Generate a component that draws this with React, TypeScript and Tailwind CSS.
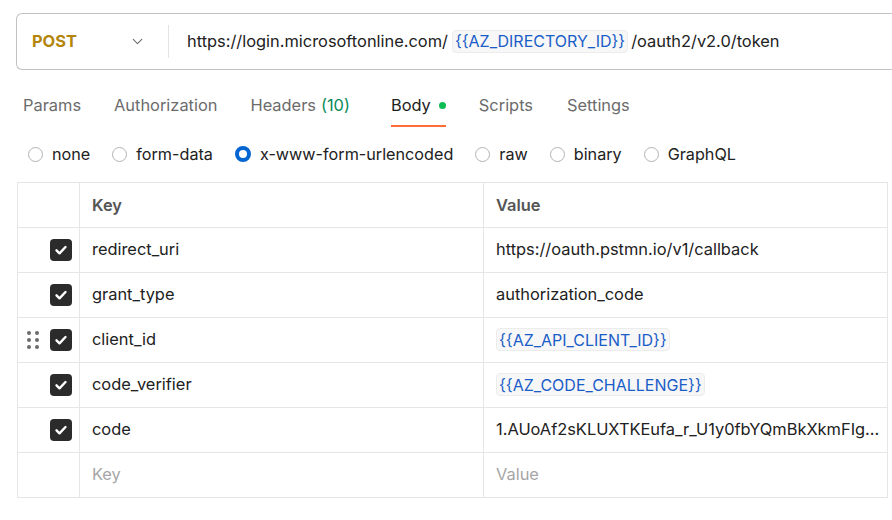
import { ChevronDown } from "lucide-react";

const font = { fontFamily: "Inter, 'Noto Sans', sans-serif" };

function Variable({ name, className = "" }: { name: string; className?: string }) {
  return (
    <span
      className={`inline-flex h-[23px] items-center rounded-[4px] border border-[#ececec] bg-[#f7f7f7] px-[2px] text-[16px] text-[#1a5dc8] ${className}`}
    >
      {`{{${name}}}`}
    </span>
  );
}

function Check() {
  return (
    <span className="flex h-[22px] w-[22px] items-center justify-center rounded-[4px] bg-[#2b2b2b]">
      <svg width="14" height="14" viewBox="0 0 14 14" fill="none">
        <path d="M2.5 7.3l3 3 6-6.3" stroke="white" strokeWidth="2.4" strokeLinecap="round" strokeLinejoin="round" />
      </svg>
    </span>
  );
}

function DragHandle() {
  return (
    <svg width="12" height="18" viewBox="0 0 12 18" className="mr-[11px]">
      {[2, 9, 16].map((y) =>
        [2, 10].map((x) => <circle key={`${x}-${y}`} cx={x} cy={y} r="2" fill="#6b6b6b" />)
      )}
    </svg>
  );
}

function Radio({ label, checked }: { label: string; checked?: boolean }) {
  return (
    <div className="flex items-center gap-[9px]">
      {checked ? (
        <span className="h-[16px] w-[16px] rounded-full border-[4px] border-[#0265d2] bg-white" />
      ) : (
        <span className="h-[15px] w-[15px] rounded-full border border-[#b3b3b3] bg-white" />
      )}
      <span className="text-[16.2px] text-[#212121]">{label}</span>
    </div>
  );
}

type Row = {
  key: string;
  value?: string;
  variable?: string;
  drag?: boolean;
};

const rows: Row[] = [
  { key: "redirect_uri", value: "https://oauth.pstmn.io/v1/callback" },
  { key: "grant_type", value: "authorization_code" },
  { key: "client_id", variable: "AZ_API_CLIENT_ID", drag: true },
  { key: "code_verifier", variable: "AZ_CODE_CHALLENGE" },
  { key: "code", value: "1.AUoAf2sKLUXTKEufa_r_U1y0fbYQmBkXkmFIg..." },
];

const tabs = [
  { label: "Params" },
  { label: "Authorization" },
  { label: "Headers", count: "(10)" },
  { label: "Body", active: true },
  { label: "Scripts" },
  { label: "Settings" },
];

export default function App() {
  return (
    <div className="h-[520px] w-[892px] overflow-hidden bg-white pl-[16px] pt-[13px] text-[#212121]" style={font}>
      {/* url bar */}
      <div className="flex h-[57px] w-[900px] items-center rounded-l-[6px] border border-r-0 border-[#c2c2c2]">
        <div className="flex w-[151px] items-center justify-between pl-[15px] pr-[22px]">
          <span className="text-[16.4px] font-bold text-[#b3860b]">POST</span>
          <ChevronDown size={17} strokeWidth={1.5} className="text-[#6b6b6b]" />
        </div>
        <div className="h-[33px] w-px bg-[#e3e3e3]" />
        <div className="flex items-center whitespace-nowrap pl-[18px] text-[16.4px]">
          <span>https://login.microsoftonline.com/</span>
          <Variable name="AZ_DIRECTORY_ID" className="ml-[4px] mr-[3px]" />
          <span>/oauth2/v2.0/token</span>
        </div>
      </div>

      {/* tabs */}
      <div className="ml-[7px] mt-[22px] flex h-[35px] gap-[33px]">
        {tabs.map((t) => (
          <div
            key={t.label}
            className={`flex h-[35px] items-start border-b-2 pt-[1px] text-[16.4px] ${
              t.active ? "border-[#ff6c37] text-[#212121]" : "border-transparent text-[#6b6b6b]"
            } ${t.count ? "mr-[8px]" : ""} ${t.label === "Scripts" ? "mr-[1px]" : ""}`}
          >
            <span>{t.label}</span>
            {t.count && <span className="ml-[5px] text-[#0a8a5a]">{t.count}</span>}
            {t.active && <span className="ml-[8px] mt-[9px] h-[7px] w-[7px] rounded-full bg-[#0cbb52]" />}
          </div>
        ))}
      </div>

      {/* body types */}
      <div className="ml-[12px] mt-[15px] flex h-[24px] items-center gap-[22px]">
        <Radio label="none" />
        <Radio label="form-data" />
        <Radio label="x-www-form-urlencoded" checked />
        <Radio label="raw" />
        <Radio label="binary" />
        <Radio label="GraphQL" />
      </div>

      {/* table */}
      <div className="ml-px mt-[16px] w-[871px] border-l border-r border-t border-[#e6e6e6] text-[16.4px]">
        <div className="grid h-[45px] grid-cols-[62px_404px_1fr] border-b border-[#e6e6e6]">
          <div className="border-r border-[#e6e6e6]" />
          <div className="flex items-center border-r border-[#e6e6e6] pl-[12px] font-semibold text-[#555555]">Key</div>
          <div className="flex items-center pl-[12px] font-semibold text-[#555555]">Value</div>
        </div>
        {rows.map((r) => (
          <div key={r.key} className="grid h-[45px] grid-cols-[62px_404px_1fr] border-b border-[#e6e6e6]">
            <div className="flex items-center justify-end border-r border-[#e6e6e6] pr-[7px]">
              {r.drag && <DragHandle />}
              <Check />
            </div>
            <div className="flex items-center border-r border-[#e6e6e6] pl-[12px] pb-[1px]">{r.key}</div>
            <div className="flex items-center overflow-hidden whitespace-nowrap pl-[12px] pb-[1px]">
              {r.variable ? <Variable name={r.variable} /> : r.value}
            </div>
          </div>
        ))}
        <div className="grid h-[45px] grid-cols-[62px_404px_1fr] border-b border-[#e6e6e6] text-[#a6a6a6]">
          <div className="border-r border-[#e6e6e6]" />
          <div className="flex items-center border-r border-[#e6e6e6] pl-[12px] pb-[1px]">Key</div>
          <div className="flex items-center pl-[12px] pb-[1px]">Value</div>
        </div>
      </div>
    </div>
  );
}
